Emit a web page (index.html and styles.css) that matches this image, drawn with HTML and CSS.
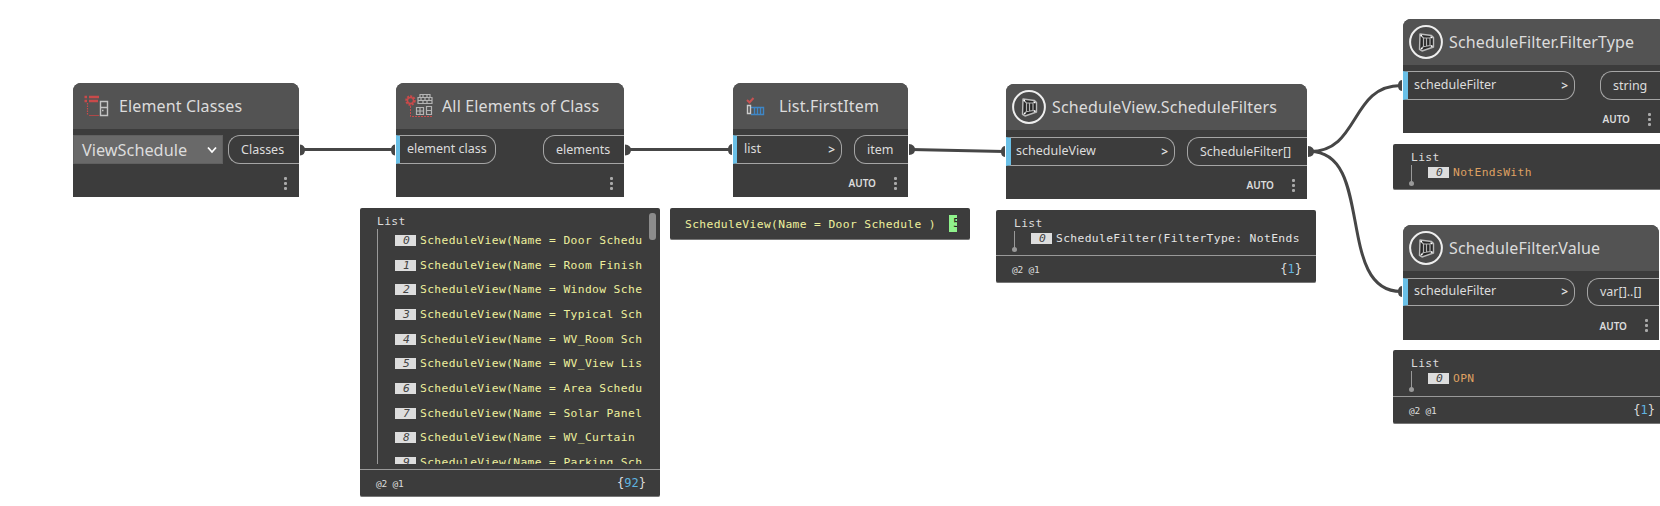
FILE: index.html
```
<!DOCTYPE html>
<html lang="en">
<head>
<meta charset="utf-8">
<title>Schedule graph</title>
<link rel="stylesheet" href="styles.css">
</head>
<body>
<svg class="defs" width="0" height="0">
  <symbol id="cube" viewBox="0 0 34 34">
    <circle cx="17" cy="17" r="15.900" fill="#4a4a4a" stroke="#eee" stroke-width="2"/>
    <path d="M11 9L22.500 10.500L24.500 12.500V22L13 26L10.500 24.500Z" fill="#262626" stroke="#bbb" stroke-width="1.400" stroke-linejoin="round"/>
    <path d="M14.500 13H21V20.500L14.500 21.500ZM17.500 13V21M11 9.500L14.500 13M22.500 11L21 13M11 25L14.500 21.500M24 22L21 20.500" fill="none" stroke="#b4b4b4" stroke-width="1.200"/>
    <path d="M11.500 10.500h1.500M22 12.500h1.500M12 23.500h1.500M22 21h1.500" stroke="#fff" stroke-width="1.700"/>
  </symbol>
</svg>
<main class="canvas">
  <svg class="wires" width="1660" height="506" viewBox="0 0 1660 506">
    <g fill="none" stroke="#464646" stroke-width="3">
      <path d="M302 149.500H394M627 149.500H731M911 149.500L1004 151.500M1310 151.500C1360 151.500 1350 85.500 1401 85.500M1310 151.500C1375 151.500 1335 291.500 1401 291.500"/>
    </g>
    <g fill="#464646">
      <path d="M300 144.500q5 .5 5 5.500t-5 5.500ZM625 144.500q6 .5 6 5.500t-6 5.500ZM909 144q6 .5 6 5.500t-6 5.500ZM1308 146q6 .5 6 5.500t-6 5.500Z"/>
      <path d="M395 144.500q-4 .5-4 5.500t4 5.500ZM732 144q-4 .5-4 5.500t4 5.500ZM1005 146q-4 .5-4 5.500t4 5.500ZM1402 80q-4 .5-4 5.500t4 5.500ZM1402 286q-4 .5-4 5.500t4 5.500Z"/>
    </g>
  </svg>

  <section class="node n1">
    <header><svg class="icon" width="26" height="22" viewBox="0 0 26 22"><path d="M.5 2h2.500M5 2h10M.5 6h2.500M5 6h9" stroke="#c94a4a" stroke-width="2.300"/><path d="M3.500 8V20.500" stroke="#c94a4a" stroke-width="1.200" stroke-dasharray="1.500 1"/><path d="M5 20.500H15" stroke="#b04848"/><path d="M16.500 6.500h7v14h-7zM16.500 12.500h7M18 15.500h1.500" fill="none" stroke="#c4c4c4" stroke-width="1.400"/></svg><h2>Element Classes</h2></header>
    <div class="ports"><div class="select"><span>ViewSchedule</span><svg width="10" height="8" viewBox="0 0 10 8"><path d="M1 1.500L5 6L9 1.500" fill="none" stroke="#fff" stroke-width="1.800"/></svg></div><div class="out"><span>Classes</span></div></div>
    <footer><i class="dots"></i></footer>
  </section>

  <section class="node n2">
    <header><svg class="icon" width="28" height="24" viewBox="0 0 28 24"><circle cx="5.500" cy="6.500" r="4" fill="none" stroke="#c94a4a" stroke-width="2.500" stroke-dasharray="2 1"/><circle cx="5.500" cy="6.500" r="3" fill="none" stroke="#c94a4a" stroke-width="1.400"/><path d="M5.500 12V22.500H28" fill="none" stroke="#c94a4a" stroke-dasharray="2 1"/><path d="M15 .5h10v3h2v6h-14v-6h2zM13 6.500h14M18 .5v3M22 .5v3M16 3.500v3M20 3.500v3M24 3.500v3M18 6.500v3M22 6.500v3M15 3.500h10M11.500 13.500h7v7h-7zM15 13.500v7M11.500 17h7M21.500 12.500h5v8h-5zM21.500 16.500h5" fill="none" stroke="#b4b4b4" stroke-width="1.200"/></svg><h2>All Elements of Class</h2></header>
    <div class="ports"><div class="in"><span>element class</span></div><div class="out"><span>elements</span></div></div>
    <footer><i class="dots"></i></footer>
  </section>

  <section class="node n3">
    <header><svg class="icon" width="19" height="19" viewBox="0 0 19 19"><path d="M1 3L3.500 5.500L7.500 1" fill="none" stroke="#c95252" stroke-width="2"/><path d="M5 10.500H17.500V17.500H5M8.500 10v8M11.500 10v8M14.500 10v8" fill="none" stroke="#3e86c6" stroke-width="1.400"/><path d="M1.500 8.500h3v8h-3z" fill="none" stroke="#ccc" stroke-width="1.400"/></svg><h2>List.FirstItem</h2></header>
    <div class="ports"><div class="in"><span>list</span><b>&gt;</b></div><div class="out"><span>item</span></div></div>
    <footer><span>AUTO</span><i class="dots"></i></footer>
  </section>

  <section class="node zt n4">
    <header><svg class="icon" width="34" height="34"><use href="#cube"/></svg><h2>ScheduleView.ScheduleFilters</h2></header>
    <div class="ports"><div class="in"><span>scheduleView</span><b>&gt;</b></div><div class="out"><span>ScheduleFilter[]</span></div></div>
    <footer><span>AUTO</span><i class="dots"></i></footer>
  </section>

  <section class="node zt n5">
    <header><svg class="icon" width="34" height="34"><use href="#cube"/></svg><h2>ScheduleFilter.FilterType</h2></header>
    <div class="ports"><div class="in"><span>scheduleFilter</span><b>&gt;</b></div><div class="out"><span>string</span></div></div>
    <footer><span>AUTO</span><i class="dots"></i></footer>
  </section>

  <section class="node zt n6">
    <header><svg class="icon" width="34" height="34"><use href="#cube"/></svg><h2>ScheduleFilter.Value</h2></header>
    <div class="ports"><div class="in"><span>scheduleFilter</span><b>&gt;</b></div><div class="out"><span>var[]..[]</span></div></div>
    <footer><span>AUTO</span><i class="dots"></i></footer>
  </section>

  <section class="panel p2">
    <div class="content">
      <div class="root">List</div>
      <ol class="items">
        <li><em>0</em>ScheduleView(Name = Door Schedu</li>
        <li><em>1</em>ScheduleView(Name = Room Finish</li>
        <li><em>2</em>ScheduleView(Name = Window Sche</li>
        <li><em>3</em>ScheduleView(Name = Typical Sch</li>
        <li><em>4</em>ScheduleView(Name = WV_Room Sch</li>
        <li><em>5</em>ScheduleView(Name = WV_View Lis</li>
        <li><em>6</em>ScheduleView(Name = Area Schedu</li>
        <li><em>7</em>ScheduleView(Name = Solar Panel</li>
        <li><em>8</em>ScheduleView(Name = WV_Curtain</li>
        <li><em>9</em>ScheduleView(Name = Parking Sch</li>
      </ol>
    </div>
    <div class="levels"><span>@2 @1</span><span class="count">{<b>92</b>}</span></div>
    <i class="thumb"></i>
  </section>

  <section class="panel p3"><span>ScheduleView(Name = Door Schedule )</span><span class="id">5</span></section>

  <section class="panel small p4">
    <div class="content"><div class="root">List</div><ol class="items"><li><em>0</em>ScheduleFilter(FilterType: NotEnds</li></ol></div>
    <div class="levels"><span>@2 @1</span><span class="count">{<b>1</b>}</span></div>
  </section>

  <section class="panel small value p5">
    <div class="content"><div class="root">List</div><ol class="items"><li><em>0</em>NotEndsWith</li></ol></div>
  </section>

  <section class="panel small value p6">
    <div class="content"><div class="root">List</div><ol class="items"><li><em>0</em>OPN</li></ol></div>
    <div class="levels"><span>@2 @1</span><span class="count">{<b>1</b>}</span></div>
  </section>
</main>
</body>
</html>
```
FILE: styles.css
```
* { box-sizing: border-box; }
body { margin: 0; background: #fff; }
.defs { position: absolute; }
.canvas { position: relative; width: 1660px; height: 506px; overflow: hidden; font-family: "Noto Sans", sans-serif; color: #dcdcdc; }
.wires { position: absolute; left: 0; top: 0; }

.node { position: absolute; height: 114px; background: #3c3c3c; border-radius: 8px 8px 0 0; display: flex; flex-direction: column; }
.node header { height: 46px; flex: none; background: #535353; border-radius: 8px 8px 0 0; display: flex; align-items: center; }
.icon { flex: none; display: block; }
h2 { margin: 0; font-size: 16px; font-weight: 400; line-height: 22px; letter-spacing: .15px; white-space: nowrap; }
.ports { height: 29px; flex: none; margin-top: 6px; display: flex; justify-content: space-between; }
.in, .out { display: flex; align-items: center; border: 1px solid #a5a5a5; font-size: 12.500px; line-height: 18px; white-space: nowrap; }
.in { border-left: 4px solid #6ac0e7; border-radius: 0 12px 12px 0; padding: 0 6px 2px 7px; justify-content: space-between; }
.in b { font-size: 12px; font-weight: 600; position: relative; top: 1px; }
.out { border-right: 0; border-radius: 12px 0 0 12px; padding-left: 12px; }
.select { width: 150px; background: #696969; border: 1px solid #606060; display: flex; align-items: center; justify-content: space-between; padding: 0 5px 0 8px; font-size: 16.300px; }
.node footer { flex: 1; display: flex; align-items: center; justify-content: flex-end; font-size: 10px; font-weight: 600; padding: 5px 11px 0 0; }
.dots { width: 3px; height: 15px; margin-left: 18px; background: radial-gradient(circle, #aaa 1.300px, transparent 1.700px) 0 0 / 3px 5px; }

.n1 { left: 73px; top: 83px; width: 226px; }
.n1 header { padding-left: 11px; gap: 9px; }
.n1 .out { width: 71px; }
.n1 footer { padding-right: 12px; }
.n2 { left: 396px; top: 83px; width: 228px; }
.n2 header { padding-left: 9px; gap: 9px; }
.n2 .in { width: 100px; }
.n2 .out { width: 81px; }
.n3 { left: 733px; top: 83px; width: 175px; }
.n3 header { padding-left: 13px; gap: 14px; }
.n3 .in { width: 109px; }
.n3 .out { width: 54px; }

.zt header { padding-left: 6px; gap: 6px; }
.zt .in { width: 169px; border-left-width: 5px; padding-left: 5px; }
.n4 { left: 1006px; top: 84px; width: 301px; height: 115px; }
.n4 .ports { margin-top: 7px; }
.n4 .out { width: 120px; }
.n4 footer { padding-right: 12px; }
.n5 { left: 1403px; top: 19px; width: 262px; }
.n5 .in, .n6 .in { width: 172px; padding-left: 6px; }
.n5 .out { width: 65px; }
.n5 footer { padding-right: 14px; }
.n6 { left: 1403px; top: 225px; width: 256px; height: 115px; }
.n6 .ports { margin-top: 7px; height: 28px; }
.n6 .out { width: 72px; }

.panel { position: absolute; background: #3c3c3c; border-radius: 2px; border-bottom: 1px solid #777; font-family: "DejaVu Sans Mono", monospace; font-size: 11.300px; letter-spacing: .37px; display: flex; flex-direction: column; white-space: nowrap; }
.content { flex: 1; min-height: 0; overflow: hidden; padding: 5px 18px 0; }
.root { height: 16px; line-height: 17px; }
.items { list-style: none; margin: 0; padding: 0 0 0 17px; border-left: 1px solid #999; color: #eef09c; overflow: hidden; }
.items li { display: flex; align-items: center; gap: 4px; height: 24.700px; line-height: 15px; }
.items em { flex: none; width: 21px; height: 11px; line-height: 11px; background: #ddd; color: #444; padding-left: 8px; }
.levels { height: 27px; flex: none; border-top: 1px solid #999; display: flex; align-items: center; justify-content: space-between; padding: 0 14px 0 16px; font-size: 9.500px; letter-spacing: -.2px; }
.count { font-size: 12px; letter-spacing: 0; }
.count b { font-weight: 400; color: #5fb5e0; }
.thumb { position: absolute; right: 4px; top: 5px; width: 7px; height: 27px; border-radius: 3px; background: #8c8c8c; }
.p2 { left: 360px; top: 208px; width: 300px; height: 289px; }
.p2 .content { margin-bottom: 5px; padding-left: 17px; }
.p2 .items li { position: relative; top: -1px; }
.p3 { left: 670px; top: 208px; width: 300px; height: 32px; flex-direction: row; align-items: center; justify-content: space-between; padding: 2px 13px 0 15px; color: #eef09c; }
.id { width: 8px; height: 17px; line-height: 17px; overflow: hidden; background: #8ff38c; color: #222; padding-left: 4px; font-size: 12px; margin-top: -2px; }
.small .items { height: 19px; overflow: visible; position: relative; color: #e4e4e4; }
.small .items li { height: 15px; }
.small .items::after { content: ""; position: absolute; left: -3px; bottom: -2px; width: 5px; height: 5px; border-radius: 50%; background: #999; }
.small.value .items { color: #dfa062; }
.small .items { padding-left: 16px; }
.p4 { left: 996px; top: 210px; width: 320px; height: 73px; }
.p5 { left: 1393px; top: 144px; width: 300px; height: 46px; }
.p6 { left: 1393px; top: 350px; width: 276px; height: 74px; }
```
